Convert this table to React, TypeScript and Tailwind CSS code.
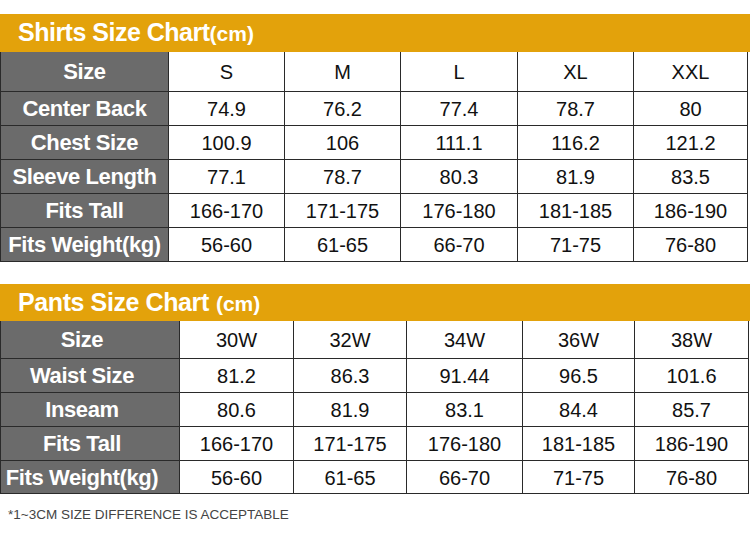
const SHIRTS = {
  cols: ["S", "M", "L", "XL", "XXL"],
  rows: [
    { label: "Center Back", values: ["74.9", "76.2", "77.4", "78.7", "80"] },
    { label: "Chest Size", values: ["100.9", "106", "111.1", "116.2", "121.2"] },
    { label: "Sleeve Length", values: ["77.1", "78.7", "80.3", "81.9", "83.5"] },
    { label: "Fits Tall", values: ["166-170", "171-175", "176-180", "181-185", "186-190"] },
    { label: "Fits Weight(kg)", values: ["56-60", "61-65", "66-70", "71-75", "76-80"] },
  ],
};

const PANTS = {
  cols: ["30W", "32W", "34W", "36W", "38W"],
  rows: [
    { label: "Waist Size", values: ["81.2", "86.3", "91.44", "96.5", "101.6"] },
    { label: "Inseam", values: ["80.6", "81.9", "83.1", "84.4", "85.7"] },
    { label: "Fits Tall", values: ["166-170", "171-175", "176-180", "181-185", "186-190"] },
    { label: "Fits Weight(kg)", values: ["56-60", "61-65", "66-70", "71-75", "76-80"] },
  ],
};

function LabelCell({ children, h, pants }: { children: string; h: string; pants?: boolean }) {
  return (
    <div
      className={`${h} bg-[#6b6b6b] border-l border-r border-b border-[#2a2a2a] flex items-center justify-center text-white font-bold text-[22px] tracking-[-0.4px] whitespace-nowrap ${
        pants ? "pr-[16px]" : ""
      }`}
    >
      {children}
    </div>
  );
}

function ValueCell({ children, h }: { children: string; h: string }) {
  return (
    <div className={`${h} bg-white border-r border-b border-[#2a2a2a] flex items-center justify-center text-[#111] text-[20px] pt-[1px]`}>
      {children}
    </div>
  );
}

export default function App() {
  return (
    <div className="w-[750px] h-[534px] bg-white overflow-hidden pt-[14px] font-['Liberation_Sans',Arial,sans-serif]">
      {/* Shirts */}
      <div className="h-[38px] bg-[#e3a20b] flex items-center pl-[18px] text-white font-bold">
        <span className="text-[25px] tracking-[-0.5px]">Shirts Size Chart</span>
        <span className="text-[21px] mt-[2px]">(cm)</span>
      </div>
      <div className="w-[748px] grid grid-cols-[169px_116px_116px_117px_116px_1fr]">
        <LabelCell h="h-[40px]">Size</LabelCell>
        {SHIRTS.cols.map(c => (
          <ValueCell key={c} h="h-[40px]">{c}</ValueCell>
        ))}
        {SHIRTS.rows.map(r => (
          <div key={r.label} className="contents">
            <LabelCell h="h-[34px]">{r.label}</LabelCell>
            {r.values.map((v, i) => (
              <ValueCell key={i} h="h-[34px]">{v}</ValueCell>
            ))}
          </div>
        ))}
      </div>

      {/* Pants */}
      <div className="mt-[22px] h-[37px] bg-[#e3a20b] flex items-center pl-[18px] text-white font-bold">
        <span className="text-[25px] tracking-[-0.4px]">Pants Size Chart</span>
        <span className="text-[21px] ml-[7px] mt-[2px]">(cm)</span>
      </div>
      <div className="w-[749px] grid grid-cols-[180px_114px_113px_116px_112px_1fr]">
        <LabelCell h="h-[38px]" pants>Size</LabelCell>
        {PANTS.cols.map(c => (
          <ValueCell key={c} h="h-[38px]">{c}</ValueCell>
        ))}
        {PANTS.rows.map((r, ri) => (
          <div key={r.label} className="contents">
            <LabelCell h={ri === 3 ? "h-[33px]" : "h-[34px]"} pants>{r.label}</LabelCell>
            {r.values.map((v, i) => (
              <ValueCell key={i} h={ri === 3 ? "h-[33px]" : "h-[34px]"}>{v}</ValueCell>
            ))}
          </div>
        ))}
      </div>

      <p className="mt-[11px] pl-[8px] text-[13.5px] text-[#444]">*1~3CM SIZE DIFFERENCE IS ACCEPTABLE</p>
    </div>
  );
}
